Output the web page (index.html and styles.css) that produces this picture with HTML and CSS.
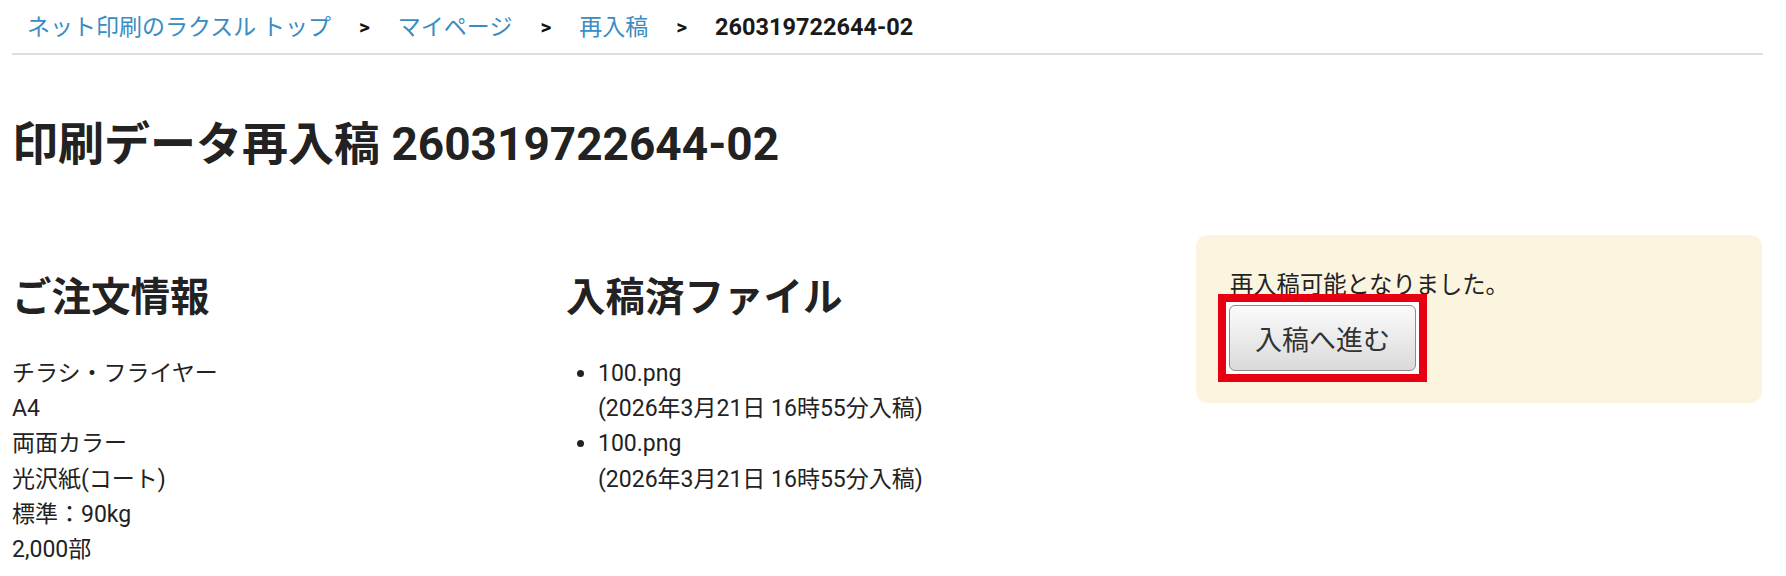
FILE: index.html
```html
<!DOCTYPE html>
<html lang="ja">
<head>
<meta charset="utf-8">
<title>印刷データ再入稿</title>
<link rel="stylesheet" href="styles.css">
</head>
<body>
<div class="page">
  <nav class="crumbs">
    <a class="crumb-link" href="#">ネット印刷のラクスル トップ</a>
    <span class="sep">&gt;</span>
    <a class="crumb-link" href="#">マイページ</a>
    <span class="sep">&gt;</span>
    <a class="crumb-link" href="#">再入稿</a>
    <span class="sep">&gt;</span>
    <span class="crumb-current">260319722644-02</span>
  </nav>

  <h1 class="title">印刷データ再入稿 260319722644-02</h1>

  <div class="row">
    <section class="col">
      <h2 class="heading">ご注文情報</h2>
      <div class="lines">
        <div>チラシ・フライヤー</div>
        <div>A4</div>
        <div>両面カラー</div>
        <div>光沢紙(コート)</div>
        <div>標準：90kg</div>
        <div>2,000部</div>
      </div>
    </section>
    <section class="col">
      <h2 class="heading">入稿済ファイル</h2>
      <ul class="files">
        <li>100.png<br>(2026年3月21日 16時55分入稿)</li>
        <li>100.png<br>(2026年3月21日 16時55分入稿)</li>
      </ul>
    </section>
    <aside class="notice">
      <p class="notice-text">再入稿可能となりました。</p>
      <span class="highlight"><button class="btn" type="button">入稿へ進む</button></span>
    </aside>
  </div>
</div>
</body>
</html>
```

FILE: styles.css
```css
html, body {
  margin: 0;
  padding: 0;
  background: #fff;
}
body {
  font-family: "Roboto", "Noto Sans CJK JP", sans-serif;
  color: #222;
  font-size: 23px;
}
.page {
  padding: 0 23px 0 12px;
}
.crumbs {
  display: flex;
  align-items: center;
  padding: 10px 15px 8px;
  line-height: 35px;
  border-bottom: 2px solid #dedede;
  font-size: 23px;
}
.crumb-link {
  color: #3a8cc1;
  text-decoration: none;
}
.sep {
  margin: 0 28px;
  font-weight: 700;
  font-size: 21px;
  color: #111;
}
.crumb-current {
  font-weight: 700;
  color: #1a1a1a;
  font-size: 23.5px;
}
.title {
  margin: 62px 0 0;
  font-size: 46px;
  line-height: 55px;
  font-weight: 700;
  color: #222;
}
.row {
  display: grid;
  grid-template-columns: 554px 630px 566px;
  margin-top: 63px;
  align-items: start;
}
.heading {
  margin: 40px 0 0;
  font-size: 39.5px;
  line-height: 46px;
  font-weight: 700;
  color: #222;
}
.lines {
  margin-top: 35px;
  line-height: 35.2px;
}
.files {
  margin: 35px 0 0;
  padding-left: 32px;
  line-height: 35.2px;
}
.notice {
  background: #fbf4df;
  border-radius: 12px;
  padding: 33px 34px;
}
.notice-text {
  margin: 0;
  line-height: 35px;
  font-size: 23.3px;
}
.highlight {
  display: inline-block;
  vertical-align: top;
  margin: -10px -11px -12px -12px;
  margin-top: -9px;
  border: 8px solid #e60012;
  padding: 3px;
  background: #fff;
}
.btn {
  display: block;
  width: 187px;
  height: 66px;
  border: 1px solid #8c8c8c;
  border-radius: 6px;
  background: linear-gradient(#fbfbfb, #dadada);
  font-family: "Noto Sans CJK JP", sans-serif;
  font-size: 27px;
  color: #333;
  padding: 0;
}
```
